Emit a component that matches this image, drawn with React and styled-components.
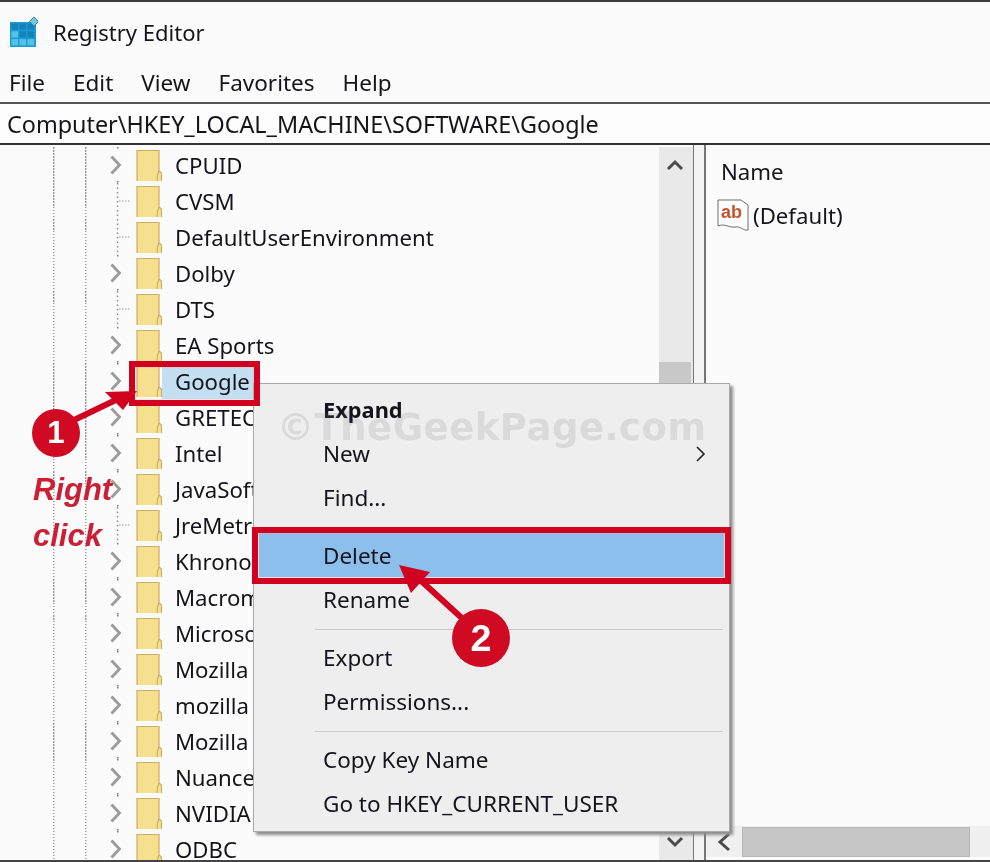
import React from "react";
import styled, { createGlobalStyle } from "styled-components";

const Global = createGlobalStyle`
  html, body {
    margin: 0;
    padding: 0;
    background: #fbfbfb;
  }
`;

const RED = "#d0021f";

const Window = styled.div`
  position: relative;
  width: 990px;
  height: 862px;
  overflow: hidden;
  display: flex;
  flex-direction: column;
  background: #fbfbfb;
  color: #15131c;
  font-family: "Noto Sans", "Open Sans", sans-serif;
  font-size: 22.2px;
  filter: blur(0.45px);
`;

const TitleBar = styled.div`
  height: 62px;
  border-top: 2px solid #3a3a3a;
  box-sizing: border-box;
  display: flex;
  align-items: center;
  padding: 0 0 0 10px;
  gap: 15px;
  font-size: 22px;
`;

const MenuBar = styled.div`
  height: 40px;
  display: flex;
  align-items: center;
  padding-left: 9px;
  gap: 28px;
  font-size: 22.5px;
`;

const AddressBar = styled.div`
  height: 39px;
  display: flex;
  align-items: center;
  padding-left: 7px;
  font-size: 23.35px;
  border-top: 2px solid #555;
  border-bottom: 2px solid #333;
  background: #fdfdfd;
`;

const Panes = styled.div`
  flex: 1;
  min-height: 0;
  display: flex;
  border-bottom: 2px solid #444;
`;

const TreePane = styled.div`
  position: relative;
  width: 694px;
  flex: none;
  display: flex;
  border-right: 1px solid #777;
  box-sizing: border-box;
`;

const Tree = styled.div`
  flex: 1;
  min-width: 0;
  padding-top: 2px;
  overflow: hidden;
`;

const Row = styled.div`
  height: 36px;
  display: flex;
  align-items: stretch;
`;

const Indent = styled.div`
  width: 53px;
  flex: none;
`;

const Guide = styled.div`
  width: 32px;
  flex: none;
  background: repeating-linear-gradient(to bottom, #9a9a9a 0 1.5px, transparent 1.5px 3px) left top / 1.5px 100% no-repeat;
`;

const Branch = styled.svg`
  width: 32px;
  height: 36px;
  flex: none;
  margin-left: -16px;
  margin-right: 3px;
`;

const FolderIcon = styled.svg`
  width: 26px;
  height: 34px;
  flex: none;
`;

const RowLabel = styled.div`
  display: flex;
  align-items: center;
  height: 36px;
  padding: 0 8px 0 13px;
  white-space: nowrap;
  background: ${(p) => (p.$selected ? "#c4dff2" : "transparent")};
`;

const VScroll = styled.div`
  width: 32px;
  flex: none;
  margin-top: 2px;
  background: #e9e9e9;
  display: flex;
  flex-direction: column;
  align-items: center;
  padding-right: 2px;
  box-sizing: content-box;
`;

const ArrowBox = styled.div`
  height: 36px;
  flex: none;
  display: flex;
  align-items: center;
  justify-content: center;
`;

const VThumb = styled.div`
  width: 100%;
  height: 40px;
  margin-top: 179px;
  background: #c8c8c8;
`;

const Spacer = styled.div`
  flex: 1;
`;

const Splitter = styled.div`
  width: 10px;
  flex: none;
  background: #f4f4f4;
  border-right: 2px solid #777;
`;

const ValuePane = styled.div`
  flex: 1;
  min-width: 0;
  display: flex;
  flex-direction: column;
`;

const ValueHeader = styled.div`
  height: 52px;
  display: flex;
  align-items: center;
  padding: 0 0 0 15px;
`;

const ValueRow = styled.div`
  display: flex;
  align-items: center;
  gap: 4px;
  height: 36px;
  padding-left: 11px;
`;

const HScroll = styled.div`
  height: 31px;
  margin-bottom: 3px;
  background: #f0f0f0;
  display: flex;
  align-items: center;
`;

const HArrow = styled.div`
  width: 36px;
  flex: none;
  display: flex;
  align-items: center;
  justify-content: center;
`;

const HThumb = styled.div`
  width: 228px;
  height: 30px;
  background: #c6c6c6;
  border: 1px solid #b8b8b8;
  box-sizing: border-box;
`;

const ContextMenu = styled.div`
  position: absolute;
  left: 253px;
  top: 383px;
  width: 477px;
  height: 449px;
  box-sizing: border-box;
  padding: 3px 5px;
  background: #eeeeee;
  border: 1px solid #a9a9a9;
  box-shadow: 3px 3px 3px #8a8a8a;
  font-size: 22.5px;
`;

const MenuItem = styled.div`
  position: relative;
  height: 44px;
  display: flex;
  align-items: center;
  padding-left: 64px;
  font-weight: ${(p) => (p.$bold ? 700 : 400)};
  font-size: ${(p) => (p.$bold ? "21.8px" : "inherit")};
  background: ${(p) => (p.$active ? "#8dbfec" : "transparent")};
`;

const MenuChevron = styled.svg`
  position: absolute;
  right: 17px;
  top: 15px;
`;

const MenuSeparator = styled.div`
  height: 14px;
  display: flex;
  align-items: center;
  padding: 0 1px 0 56px;
  &::after {
    content: "";
    flex: 1;
    height: 1px;
    margin-top: 2px;
    background: #c9c9c9;
  }
`;

const Watermark = styled.div`
  position: absolute;
  left: 277px;
  top: 406px;
  font-family: "DejaVu Sans", sans-serif;
  font-size: 37px;
  font-weight: 700;
  letter-spacing: 0.5px;
  color: rgba(120, 120, 120, 0.17);
  white-space: nowrap;
`;

const RedFrame = styled.div`
  position: absolute;
  box-sizing: border-box;
  border: 6px solid ${RED};
  box-shadow: inset 0 0 2px #f4a0a8;
`;

const Overlay = styled.svg`
  position: absolute;
  left: 0;
  top: 0;
  pointer-events: none;
`;

const Badge = styled.div`
  position: absolute;
  left: ${(p) => p.$x - p.$r}px;
  top: ${(p) => p.$y - p.$r}px;
  width: ${(p) => p.$r * 2}px;
  height: ${(p) => p.$r * 2}px;
  border-radius: 50%;
  background: #cf0a22;
  color: #fff;
  display: flex;
  align-items: center;
  justify-content: center;
  font-family: "Liberation Sans", sans-serif;
  font-weight: 700;
  font-size: ${(p) => p.$r * 1.3}px;
`;

const Callout = styled.div`
  position: absolute;
  left: 33px;
  top: 467px;
  font-family: "Liberation Sans", sans-serif;
  font-style: italic;
  font-weight: 700;
  font-size: 31px;
  line-height: 46px;
  color: #cc1f36;
`;

const rows = [
  ["CPUID", true],
  ["CVSM", false],
  ["DefaultUserEnvironment", false],
  ["Dolby", true],
  ["DTS", false],
  ["EA Sports", true],
  ["Google", true],
  ["GRETECH", true],
  ["Intel", true],
  ["JavaSoft", true],
  ["JreMetrics", false],
  ["Khronos", true],
  ["Macromedia", true],
  ["Microsoft", true],
  ["Mozilla", true],
  ["mozilla", true],
  ["Mozilla", true],
  ["Nuance", true],
  ["NVIDIA", true],
  ["ODBC", true],
];

function RegistryIcon() {
  return (
    <svg width="28" height="30" viewBox="0 0 28 30">
      <rect x="0" y="5" width="26" height="25" fill="#1c9bd1" />
      {[0, 1, 2].map((r) =>
        [0, 1, 2].map((c) => (
          <rect
            key={`${r}${c}`}
            x={1.5 + c * 8}
            y={6.5 + r * 7.8}
            width="6.6"
            height="6.2"
            fill={r === 0 || (r === 1 && c > 0) ? "#1583b8" : "#56c0e8"}
          />
        ))
      )}
      <path d="M24 0l4.5 4.5L24 9l-4.5-4.5z" fill="#7cc6dc" stroke="#2a86a8" strokeWidth="1" />
    </svg>
  );
}

function Folder() {
  return (
    <FolderIcon viewBox="0 0 26 34">
      <path d="M1 3.5H23V24L25.5 26V34.5H1z" fill="#f6e08f" stroke="#c9ad62" strokeWidth="1.2" />
      <path d="M23 24C21.5 27 21 30 21 34" fill="none" stroke="#c9ad62" strokeWidth="1.2" />
    </FolderIcon>
  );
}

function TreeBranch({ expandable }) {
  if (expandable) {
    return (
      <Branch viewBox="0 0 32 36">
        <path d="M10.5 9.5L18.5 18L10.5 26.5" fill="none" stroke="#9b9b9b" strokeWidth="2.8" />
        <rect x="16" y="0" width="1.5" height="1.5" fill="#777" />
        <rect x="16" y="34" width="1.5" height="1.5" fill="#777" />
      </Branch>
    );
  }
  return (
    <Branch viewBox="0 0 32 36">
      <path d="M16.5 0V36" stroke="#8c8c8c" strokeWidth="1.5" strokeDasharray="1.5 3" />
      <path d="M18 18H30" stroke="#a0a0a0" strokeWidth="1.2" strokeDasharray="1.5 1.5" />
    </Branch>
  );
}

function StringValueIcon() {
  return (
    <svg width="32" height="34" viewBox="0 0 32 34">
      <path
        d="M1 2H24L31 7V32C26 33 24 28 18 29C12 30 8 25 1 28z"
        fill="#fff"
        stroke="#6d6d6d"
        strokeWidth="1"
      />
      <text x="4" y="20" fontFamily="Liberation Sans" fontWeight="700" fontSize="18" fill="#c8522f">
        ab
      </text>
    </svg>
  );
}

function Chevron({ d }) {
  return (
    <svg width="18" height="16" viewBox="0 0 18 16">
      <path d={d} fill="none" stroke="#4a4a4a" strokeWidth="3" />
    </svg>
  );
}

export default function App() {
  return (
    <>
      <Global />
      <Window>
        <TitleBar>
          <RegistryIcon />
          <span>Registry Editor</span>
        </TitleBar>
        <MenuBar>
          <span>File</span>
          <span>Edit</span>
          <span>View</span>
          <span>Favorites</span>
          <span>Help</span>
        </MenuBar>
        <AddressBar>Computer\HKEY_LOCAL_MACHINE\SOFTWARE\Google</AddressBar>
        <Panes>
          <TreePane>
            <Tree>
              {rows.map(([name, expandable], i) => (
                <Row key={i}>
                  <Indent />
                  <Guide />
                  <Guide />
                  <TreeBranch expandable={expandable} />
                  <Folder />
                  <RowLabel $selected={name === "Google"}>{name}</RowLabel>
                </Row>
              ))}
            </Tree>
            <VScroll>
              <ArrowBox>
                <Chevron d="M2 12L9 5L16 12" />
              </ArrowBox>
              <VThumb />
              <Spacer />
              <ArrowBox>
                <Chevron d="M2 4L9 11L16 4" />
              </ArrowBox>
            </VScroll>
          </TreePane>
          <Splitter />
          <ValuePane>
            <ValueHeader>Name</ValueHeader>
            <ValueRow>
              <StringValueIcon />
              <span>(Default)</span>
            </ValueRow>
            <Spacer />
            <HScroll>
              <HArrow>
                <svg width="16" height="20" viewBox="0 0 16 20">
                  <path d="M13 2L4 10L13 18" fill="none" stroke="#4a4a4a" strokeWidth="3" />
                </svg>
              </HArrow>
              <HThumb />
            </HScroll>
          </ValuePane>
        </Panes>

        <ContextMenu>
          <MenuItem $bold>Expand</MenuItem>
          <MenuItem>
            New
            <MenuChevron width="12" height="16" viewBox="0 0 12 16">
              <path d="M2 1L9 8L2 15" fill="none" stroke="#222" strokeWidth="1.6" />
            </MenuChevron>
          </MenuItem>
          <MenuItem>Find...</MenuItem>
          <MenuSeparator />
          <MenuItem $active>Delete</MenuItem>
          <MenuItem>Rename</MenuItem>
          <MenuSeparator />
          <MenuItem>Export</MenuItem>
          <MenuItem>Permissions...</MenuItem>
          <MenuSeparator />
          <MenuItem>Copy Key Name</MenuItem>
          <MenuItem>Go to HKEY_CURRENT_USER</MenuItem>
        </ContextMenu>

        <Watermark>©TheGeekPage.com</Watermark>

        <RedFrame style={{ left: 129, top: 361, width: 131, height: 45 }} />
        <RedFrame style={{ left: 252, top: 527, width: 479, height: 57 }} />

        <Overlay width="990" height="862" viewBox="0 0 990 862">
          <path d="M72 421L122 397" stroke={RED} strokeWidth="6" />
          <path d="M137 391L105 392L123 410z" fill={RED} />
          <path d="M464 620L418 578" stroke={RED} strokeWidth="6" />
          <path d="M399 565L430 572L411 593z" fill={RED} />
        </Overlay>
        <Badge $x={56} $y={433} $r={24}>1</Badge>
        <Badge $x={481} $y={638} $r={29}>2</Badge>
        <Callout>
          Right
          <br />
          click
        </Callout>
      </Window>
    </>
  );
}
